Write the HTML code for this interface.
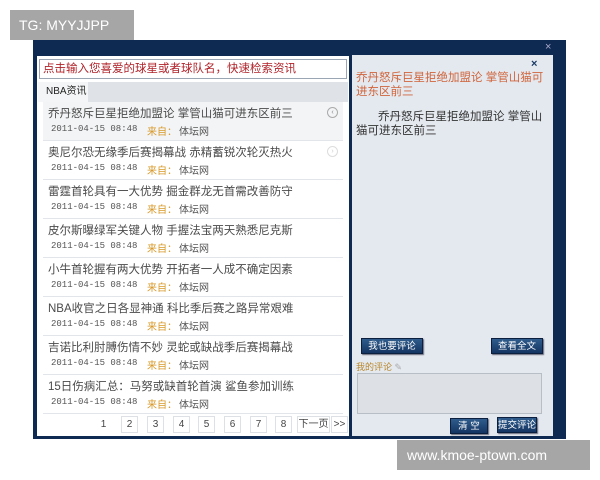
<!DOCTYPE html>
<html><head><meta charset="utf-8"><style>
*{margin:0;padding:0;box-sizing:border-box}
body{width:600px;height:480px;background:#fff;position:relative;overflow:hidden;font-family:"Liberation Sans","Noto Sans CJK SC",sans-serif}
.abs{position:absolute}
#outer{left:33px;top:40px;width:533px;height:399px;background:#0f2a52;}
#left{left:37px;top:56px;width:312px;height:380px;background:#fff;}
#search{left:39px;top:59px;width:308px;height:20px;border:1px solid #9aa6b4;background:#fff;color:#b0232a;font-size:11.5px;line-height:18px;padding-left:3px}
#tabbar{left:38px;top:82px;width:310px;height:20px;background:#dfe3e8}
#tab{left:38px;top:82px;width:50px;height:20px;background:#f4f5f7;font-size:10px;line-height:20px;padding-left:8px;color:#222}
.row{position:absolute;left:43px;width:300px;height:39px;border-bottom:1px solid #e2e5ea}
.row .t{position:absolute;left:5px;top:3px;font-size:11.5px;color:#4a4a4a;white-space:nowrap}
.row .d{position:absolute;left:8px;top:22px;font-size:9px;color:#555;font-family:"Liberation Mono",monospace}
.row .s{position:absolute;left:104px;top:21px;font-size:10px;color:#d89a2a}
.row .w{position:absolute;left:136px;top:21px;font-size:10px;color:#555}
#right{left:352px;top:55px;width:201px;height:381px;background:#e4e9ef}
.btn{position:absolute;height:16px;background:linear-gradient(#2f5c8c,#143563);color:#fff;font-size:9.5px;line-height:16px;text-align:center;border:1px solid #0b1f3e;box-shadow:1px 1px 1px #667}
.pg{position:absolute;top:416px;width:17px;height:17px;border:1px solid #dde0e4;font-size:10px;line-height:15px;text-align:center;color:#444}
.wm{position:absolute;background:#a6a6a6;color:#fff;font-size:14px}
</style></head><body>
<div id="outer" class="abs"></div>
<div class="abs" style="left:545px;top:41px;color:#aac;font-size:11px">×</div>
<div id="left" class="abs"></div>
<div id="search" class="abs">点击输入您喜爱的球星或者球队名，快速检索资讯</div>
<div id="tabbar" class="abs"></div>
<div id="tab" class="abs">NBA资讯</div>

<div class="row" style="top:102px;background:#f3f4f6"><div class="t">乔丹怒斥巨星拒绝加盟论 掌管山猫可进东区前三</div><div class="d">2011-04-15 08:48</div><div class="s">来自：</div><div class="w">体坛网</div></div>
<div class="row" style="top:141px"><div class="t">奥尼尔恐无缘季后赛揭幕战 赤精蓄锐次轮灭热火</div><div class="d">2011-04-15 08:48</div><div class="s">来自：</div><div class="w">体坛网</div></div>
<div class="row" style="top:180px"><div class="t">雷霆首轮具有一大优势 掘金群龙无首需改善防守</div><div class="d">2011-04-15 08:48</div><div class="s">来自：</div><div class="w">体坛网</div></div>
<div class="row" style="top:219px"><div class="t">皮尔斯曝绿军关键人物 手握法宝两天熟悉尼克斯</div><div class="d">2011-04-15 08:48</div><div class="s">来自：</div><div class="w">体坛网</div></div>
<div class="row" style="top:258px"><div class="t">小牛首轮握有两大优势 开拓者一人成不确定因素</div><div class="d">2011-04-15 08:48</div><div class="s">来自：</div><div class="w">体坛网</div></div>
<div class="row" style="top:297px"><div class="t">NBA收官之日各显神通 科比季后赛之路异常艰难</div><div class="d">2011-04-15 08:48</div><div class="s">来自：</div><div class="w">体坛网</div></div>
<div class="row" style="top:336px"><div class="t">吉诺比利肘膊伤情不妙 灵蛇或缺战季后赛揭幕战</div><div class="d">2011-04-15 08:48</div><div class="s">来自：</div><div class="w">体坛网</div></div>
<div class="row" style="top:375px"><div class="t">15日伤病汇总：马努或缺首轮首演 鲨鱼参加训练</div><div class="d">2011-04-15 08:48</div><div class="s">来自：</div><div class="w">体坛网</div></div>
<div class="abs" style="left:327px;top:107px;width:11px;height:11px;border:1px solid #aaa;border-radius:50%;font-size:7px;line-height:9px;text-align:center;color:#888">‹</div>
<div class="abs" style="left:327px;top:146px;width:11px;height:11px;border:1px solid #ddd;border-radius:50%;font-size:7px;line-height:9px;text-align:center;color:#ccc">›</div>

<div class="pg" style="left:95px;border-color:transparent">1</div>
<div class="pg" style="left:121px">2</div>
<div class="pg" style="left:147px">3</div>
<div class="pg" style="left:173px">4</div>
<div class="pg" style="left:198px">5</div>
<div class="pg" style="left:224px">6</div>
<div class="pg" style="left:250px">7</div>
<div class="pg" style="left:275px">8</div>
<div class="pg" style="left:297px;width:33px">下一页</div>
<div class="pg" style="left:331px;width:17px">&gt;&gt;</div>

<div id="right" class="abs"></div>
<div class="abs" style="left:531px;top:58px;font-size:11px;font-weight:bold;color:#1a3a66">×</div>
<div class="abs" style="left:356px;top:71px;width:195px;font-size:11.5px;line-height:14px;color:#d0653c">乔丹怒斥巨星拒绝加盟论 掌管山猫可进东区前三</div>
<div class="abs" style="left:356px;top:110px;width:190px;font-size:11.5px;line-height:14px;color:#333;text-indent:22px">乔丹怒斥巨星拒绝加盟论 掌管山猫可进东区前三</div>
<div class="btn" style="left:361px;top:338px;width:62px">我也要评论</div>
<div class="btn" style="left:491px;top:338px;width:52px">查看全文</div>
<div class="abs" style="left:356px;top:360px;font-size:9px;color:#b8862a">我的评论 <span style="color:#aaa">✎</span></div>
<div class="abs" style="left:357px;top:373px;width:185px;height:41px;background:#dde1e6;border:1px solid #b8bec6"></div>
<div class="btn" style="left:450px;top:418px;width:38px">清 空</div>
<div class="btn" style="left:497px;top:417px;width:40px">提交评论</div>

<div class="wm" style="left:10px;top:10px;width:124px;height:30px;line-height:30px;padding-left:9px">TG: MYYJJPP</div>
<div class="wm" style="left:397px;top:440px;width:193px;height:30px;line-height:30px;padding-left:10px">www.kmoe-ptown.com</div>
</body></html>
